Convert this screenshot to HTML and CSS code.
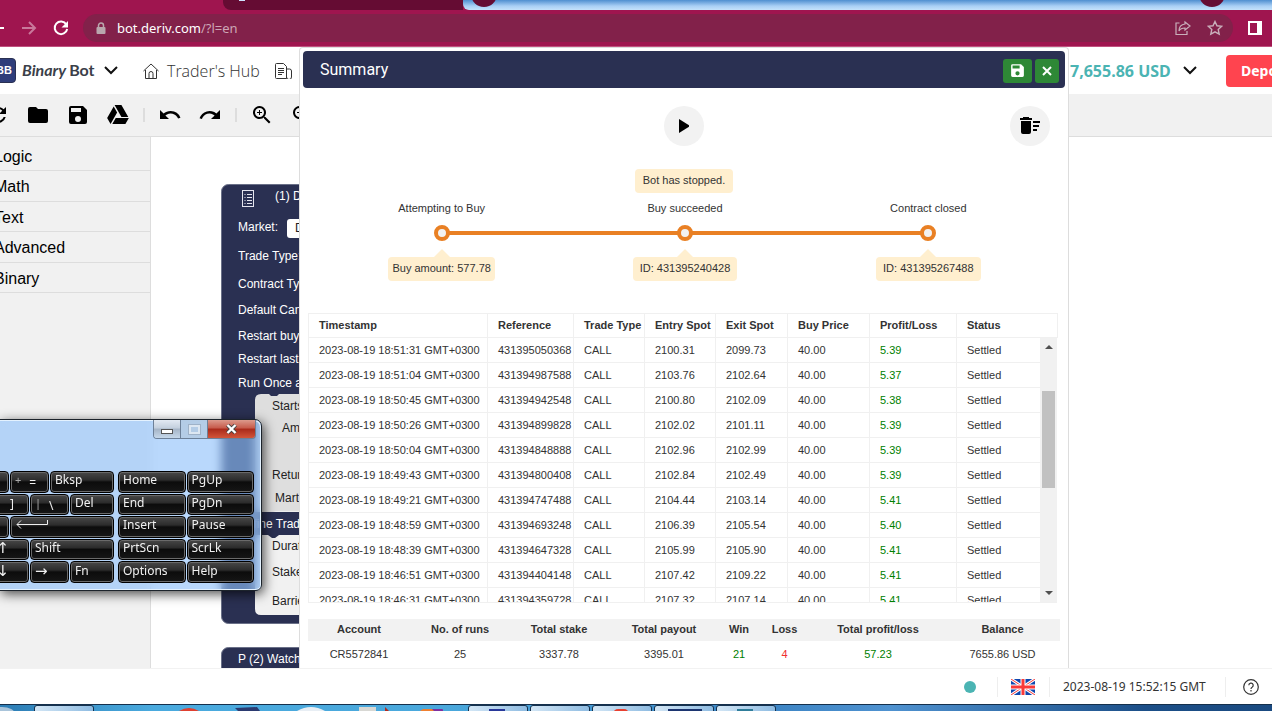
FILE: index.html
```html
<!DOCTYPE html>
<html lang="en">
<head>
  <meta charset="UTF-8" />
  <meta name="viewport" content="width=device-width, initial-scale=1.0"/>
  <title>Binary Bot</title>
  <link rel="stylesheet" href="styles.css">
</head>
<body>
  <!-- Browser chrome -->
  <div class="tabstrip">
    <div class="tab-current"></div>
    <div class="tab-other"><span class="favicon"></span></div>
    <div class="tab-glass"><span class="tab-dot"></span><span class="tab-dot"></span></div>
  </div>
  <div class="browser-bar">
    <button class="nav-btn" aria-label="Back">
      <svg width="16" height="16" viewBox="0 0 16 16"><path d="M15 8H2M8 2L2 8l6 6" fill="none" stroke="#fff" stroke-width="2"/></svg>
    </button>
    <button class="nav-btn" aria-label="Forward">
      <svg width="16" height="16" viewBox="0 0 16 16"><path d="M1 8h12.500M8 2l6 6-6 6" fill="none" stroke="#c9789b" stroke-width="2"/></svg>
    </button>
    <button class="nav-btn" aria-label="Reload">
      <svg width="16" height="16" viewBox="0 0 16 16"><path d="M13.300 4.400A6.300 6.300 0 1 0 14.200 9" fill="none" stroke="#fff" stroke-width="2"/><path d="M15 1v6.500H8.500z" fill="#fff"/></svg>
    </button>
    <div class="address">
      <svg width="10" height="13" viewBox="0 0 10 13"><rect x="0.500" y="5" width="9" height="7" rx="1" fill="#b9a7ad"/><path d="M2.500 5V3.500a2.500 2.500 0 0 1 5 0V5" fill="none" stroke="#b9a7ad" stroke-width="1.500"/></svg>
      <span class="url">bot.deriv.com<span class="url-path">/?l=en</span></span>
      <svg class="share" width="16" height="16" viewBox="0 0 16 16" fill="none" stroke="#c9b0bb" stroke-width="1.200"><path d="M4.500 3H1v11.500h11V11"/><path d="M10 2l5 4-5 4V8c-3 0-5 1-6 3 0-4 2-6.500 6-7z"/></svg>
      <svg width="16" height="16" viewBox="0 0 16 16" fill="none" stroke="#c9b0bb" stroke-width="1.400"><path d="M8 1.500l2 4.300 4.700.5-3.500 3.200 1 4.700L8 11.800l-4.200 2.400 1-4.700L1.300 6.300 6 5.800z"/></svg>
    </div>
    <button class="side-panel" aria-label="Side panel">
      <svg width="14" height="14" viewBox="0 0 14 14"><path d="M0 0h14v14H0zM2 2v10h7V2z" fill="#fff" fill-rule="evenodd"/></svg>
    </button>
  </div>

  <div class="app">
    <header class="header">
      <a class="brand" href="#">
        <span class="brand-box">BB</span>
        <span class="brand-name"><i>Binary</i>Bot</span>
        <svg width="14" height="9" viewBox="0 0 14 9"><path d="M1 1l6 6 6-6" fill="none" stroke="#111" stroke-width="2"/></svg>
      </a>
      <a class="hub" href="#">
        <svg width="16" height="16" viewBox="0 0 16 16" fill="none" stroke="#333"><path d="M.5 8L8 1l7.500 7M2.500 7v8.500h11V7M6 15.500v-5a2 2 0 0 1 4 0v5"/></svg>
        Trader's Hub
      </a>
      <a class="reports" href="#" aria-label="Reports">
        <svg width="17" height="16" viewBox="0 0 17 16" fill="none" stroke="#333"><path d="M11.500 15.500H1.500a1 1 0 0 1-1-1v-13a1 1 0 0 1 1-1h7l3 3zM11.500 6h3a2 2 0 0 1 2 2v6a1.500 1.500 0 0 1-5 0M3 5.500h6M3 7.500h6M3 9.500h6M3 11.500h4"/></svg>
      </a>
      <div class="account">
        <span class="amount">7,655.86 USD</span>
        <svg width="14" height="9" viewBox="0 0 14 9"><path d="M1 1l6 6 6-6" fill="none" stroke="#111" stroke-width="2"/></svg>
        <button class="deposit">Deposit</button>
      </div>
    </header>

    <div class="toolbar">
      <button aria-label="Reset"><svg viewBox="0 0 24 24"><path d="M17.650 6.350A8 8 0 1 0 19.730 14h-2.080A6 6 0 1 1 16.220 7.780L13 11h7V4z"/></svg></button>
      <button aria-label="Load"><svg viewBox="0 0 24 24"><path d="M10 4H4a2 2 0 0 0-2 2v12a2 2 0 0 0 2 2h16a2 2 0 0 0 2-2V8a2 2 0 0 0-2-2h-8z"/></svg></button>
      <button aria-label="Save"><svg viewBox="0 0 24 24"><path d="M17 3H5a2 2 0 0 0-2 2v14a2 2 0 0 0 2 2h14a2 2 0 0 0 2-2V7zm-5 16a3 3 0 1 1 0-6 3 3 0 0 1 0 6zm3-10H5V5h10z"/></svg></button>
      <button aria-label="Google Drive"><svg viewBox="0 0 24 24"><path d="M7.710 3.500L1.150 15l3.430 6 6.550-11.500zM9.730 15L6.300 21h13.120l3.430-6zM22.280 14L15.420 2H8.580l6.850 12z"/></svg></button>
      <span class="divider"></span>
      <button aria-label="Undo"><svg viewBox="0 0 24 24"><path d="M12.500 8c-2.650 0-5.050 1-6.900 2.600L2 7v9h9l-3.620-3.620A8 8 0 0 1 20.090 15.500l2.370-.78A10.500 10.500 0 0 0 12.500 8z"/></svg></button>
      <button aria-label="Redo"><svg viewBox="0 0 24 24"><path d="M18.400 10.600A10.500 10.500 0 0 0 1.540 15.220l2.360.78a8 8 0 0 1 12.720-3.620L13 16h9V7z"/></svg></button>
      <span class="divider"></span>
      <button aria-label="Zoom in"><svg viewBox="0 0 24 24"><path d="M15.500 14h-.79l-.28-.27a6.500 6.500 0 1 0-.7.7l.27.28v.79l5 4.990L20.490 19zm-6 0a4.500 4.500 0 1 1 0-9 4.500 4.500 0 0 1 0 9zM10 7H9v2H7v1h2v2h1v-2h2V9h-2z"/></svg></button>
      <button aria-label="Zoom out"><svg viewBox="0 0 24 24"><path d="M15.500 14h-.79l-.28-.27a6.500 6.500 0 1 0-.7.7l.27.28v.79l5 4.990L20.490 19zm-6 0a4.500 4.500 0 1 1 0-9 4.500 4.500 0 0 1 0 9zM7 9h5v1H7z"/></svg></button>
    </div>

    <div class="workspace">
      <nav class="toolbox">
        <a href="#">Logic</a>
        <a href="#">Math</a>
        <a href="#">Text</a>
        <a href="#">Advanced</a>
        <a href="#">Binary</a>
      </nav>
      <svg class="canvas">
        <g transform="translate(-151 -137)">
          <rect class="block" x="221.500" y="184.500" width="320" height="439" rx="7"/>
          <g fill="none" stroke="#e5e5ee"><rect x="242.500" y="190.500" width="11" height="16"/><path d="M244.500 194.500h1M247 194.500h5M244.500 197.500h1M247 197.500h5M244.500 200.500h1M247 200.500h5M244.500 203.500h1M247 203.500h5"/></g>
          <rect x="287" y="219" width="60" height="19" rx="3" fill="#fff"/>
          <g class="label">
            <text x="275" y="200">(1) Define</text>
            <text x="238" y="231">Market:</text>
            <text x="238" y="260">Trade Type:</text>
            <text x="238" y="288">Contract Type:</text>
            <text x="238" y="314">Default Candle</text>
            <text x="238" y="340">Restart buy/sell</text>
            <text x="238" y="363">Restart last</text>
            <text x="238" y="387">Run Once at</text>
          </g>
          <path d="M542 394H279l-2 2h-6l-2-2h-8q-6 0-6 6v112h287z" fill="#dedede"/>
          <path d="M542 535H279l-4 3h-3l-4-3h-13v74q0 6 6 6h281z" fill="#f1f1f1"/>
          <path d="M255 512h18l3-1h266v1z" fill="#eee"/>
          <g class="label dark">
            <text x="295" y="232">Derived</text>
            <text x="272" y="410">Starts</text>
            <text x="282" y="432">Amount</text>
            <text x="272" y="479">Return</text>
            <text x="275" y="502">Martingale</text>
            <text x="272" y="550">Duration:</text>
            <text x="272" y="576">Stake:</text>
            <text x="272" y="605">Barrier</text>
          </g>
          <text class="label" x="238" y="528">Define Trade</text>
          <rect class="block" x="221.500" y="647.500" width="320" height="60" rx="7"/>
          <text class="label" x="238" y="663">P (2) Watch</text>
        </g>
      </svg>
    </div>

    <!-- Summary dialog -->
    <section class="dialog" role="dialog" aria-labelledby="summary-title">
      <div class="dialog-title">
        <h1 id="summary-title">Summary</h1>
        <button class="btn-save" aria-label="Save"><svg width="17" height="17" viewBox="0 0 24 24"><path fill="#fff" d="M17 3H5a2 2 0 0 0-2 2v14a2 2 0 0 0 2 2h14a2 2 0 0 0 2-2V7zm-5 16a3 3 0 1 1 0-6 3 3 0 0 1 0 6zm3-10H5V5h10z"/></svg></button>
        <button class="btn-close" aria-label="Close"><svg width="10" height="10" viewBox="0 0 10 10"><path d="M1 1l8 8M9 1L1 9" stroke="#fff" stroke-width="2"/></svg></button>
      </div>
      <div class="actions">
        <button class="round run" aria-label="Run"><svg width="10" height="14" viewBox="0 0 10 14"><path d="M0 0l11 7-11 7z"/></svg></button>
        <button class="round clear" aria-label="Clear"><svg width="20" height="18" viewBox="0 0 20 18"><path d="M1 4h10v11a2 2 0 0 1-2 2H3a2 2 0 0 1-2-2zM0 1h3V0h6v1H12v2H0zM13 4h7v2h-7zM13 8h6v2h-6zM13 12h4v2h-4z"/></svg></button>
      </div>
      <div class="status"><span class="bubble">Bot has stopped.</span></div>
      <ol class="progress">
        <li><span class="step">Attempting to Buy</span><span class="node"></span><span class="bubble tip">Buy amount: 577.78</span></li>
        <li><span class="step">Buy succeeded</span><span class="node"></span><span class="bubble tip wide">ID: 431395240428</span></li>
        <li><span class="step">Contract closed</span><span class="node"></span><span class="bubble tip wide">ID: 431395267488</span></li>
      </ol>

      <table class="trades trades-head">
        <tr>
          <th class="c-time">Timestamp</th>
          <th class="c-ref">Reference</th>
          <th class="c-type">Trade Type</th>
          <th class="c-entry">Entry Spot</th>
          <th class="c-exit">Exit Spot</th>
          <th class="c-price">Buy Price</th>
          <th class="c-profit">Profit/Loss</th>
          <th>Status</th>
        </tr>
      </table>
      <div class="trades-scroll">
        <table class="trades" id="trades"></table>
        <div class="scrollbar"><span class="arrow up"></span><span class="thumb"></span><span class="arrow down"></span></div>
      </div>

      <table class="totals">
        <tr>
          <th class="t-account">Account</th>
          <th class="t-runs">No. of runs</th>
          <th class="t-stake">Total stake</th>
          <th class="t-payout">Total payout</th>
          <th class="t-win">Win</th>
          <th class="t-loss">Loss</th>
          <th class="t-profit">Total profit/loss</th>
          <th>Balance</th>
        </tr>
        <tr>
          <td>CR5572841</td>
          <td>25</td>
          <td>3337.78</td>
          <td>3395.01</td>
          <td class="profit">21</td>
          <td class="loss">4</td>
          <td class="profit">57.23</td>
          <td>7655.86 USD</td>
        </tr>
      </table>
    </section>
  </div>

  <footer class="footer">
    <span class="online"></span>
    <span class="sep"></span>
    <svg width="24" height="16" viewBox="0 0 24 16">
      <rect width="24" height="16" fill="#0f47af"/>
      <path d="M0 0l24 16M24 0L0 16" stroke="#fff" stroke-width="3"/>
      <path d="M0 0l24 16M24 0L0 16" stroke="#f93939" stroke-width="1"/>
      <path d="M12 0v16M0 8h24" stroke="#fff" stroke-width="5"/>
      <path d="M12 0v16M0 8h24" stroke="#f93939" stroke-width="3"/>
    </svg>
    <span class="sep"></span>
    <span class="clock">2023-08-19 15:52:15 GMT</span>
    <span class="sep"></span>
    <a class="help" href="#" aria-label="Help">
      <svg width="16" height="16" viewBox="0 0 16 16" fill="none" stroke="#333" stroke-width="1.200"><circle cx="8" cy="8" r="7.300"/><path d="M5.800 6.300a2.200 2.200 0 1 1 3.300 1.900Q8 8.800 8 10M8 11v1.400"/></svg>
    </a>
  </footer>

  <!-- Desktop taskbar -->
  <div class="taskbar">
    <span class="orb"></span>
    <span class="task first"></span>
    <svg class="pinned" width="320" height="6" viewBox="0 0 320 6">
      <path d="M56 6q10-6 20 0z" fill="#e04030"/>
      <path d="M112 3l22-1 3 4h-22z" fill="#2b3a70"/>
      <path d="M174 6q14-8 28 0z" fill="#e8eef4"/>
      <rect x="236" y="2" width="17" height="4" fill="#d8d8d4"/><path d="M262 2l4 4h-4z" fill="#b02a20"/>
      <path d="M297 6l3-2h9l3 2z" fill="#f08030"/><path d="M309 4h10l4 2h-12z" fill="#8030a0"/>
    </svg>
    <div class="tasks">
      <span class="task"><i class="app-navy"></i></span>
      <span class="task"></span>
      <span class="task"><i class="app-red"></i></span>
      <span class="task"><i class="app-wide"></i></span>
      <span class="task"><i class="app-teal"></i></span>
    </div>
  </div>

  <!-- On-screen keyboard window -->
  <div class="osk">
    <div class="osk-buttons">
      <button class="min" aria-label="Minimize"><span></span></button>
      <button class="max" aria-label="Maximize" disabled><span></span></button>
      <button class="close" aria-label="Close window"><svg width="11" height="10" viewBox="0 0 11 10"><path d="M1.500 1l8 8M9.500 1l-8 8" stroke="#444" stroke-width="4"/><path d="M1.500 1l8 8M9.500 1l-8 8" stroke="#fff" stroke-width="2.400"/></svg></button>
    </div>
    <div class="keys">
      <div class="key-row"><button class="w-rest"></button><button class="w-small two"><small>+</small>=</button><button class="w-mid">Bksp</button></div>
      <div class="key-row"><button class="w-rest right low">]</button><button class="w-small two"><small>|</small>\</button><button class="w-del">Del</button></div>
      <div class="key-row"><button class="w-rest"></button><button class="w-enter" aria-label="Enter"><svg width="34" height="10" viewBox="0 0 34 10"><path d="M32.500 1v4.500H2M6 1.500l-4 4 4 4" fill="none" stroke="#eee"/></svg></button></div>
      <div class="key-row"><button class="w-rest right arrow-key">↑</button><button class="w-shift">Shift</button></div>
      <div class="key-row"><button class="w-rest right arrow-key">↓</button><button class="w-small arrow-key">→</button><button class="w-del">Fn</button></div>
    </div>
    <div class="keys side">
      <div class="key-row"><button>Home</button><button>PgUp</button></div>
      <div class="key-row"><button>End</button><button>PgDn</button></div>
      <div class="key-row"><button>Insert</button><button>Pause</button></div>
      <div class="key-row"><button>PrtScn</button><button>ScrLk</button></div>
      <div class="key-row"><button>Options</button><button>Help</button></div>
    </div>
  </div>

  <script>
    // time, reference, entry spot, exit spot, profit
    const trades = [
      ["18:51:31", "431395050368", "2100.31", "2099.73", "5.39"],
      ["18:51:04", "431394987588", "2103.76", "2102.64", "5.37"],
      ["18:50:45", "431394942548", "2100.80", "2102.09", "5.38"],
      ["18:50:26", "431394899828", "2102.02", "2101.11", "5.39"],
      ["18:50:04", "431394848888", "2102.96", "2102.99", "5.39"],
      ["18:49:43", "431394800408", "2102.84", "2102.49", "5.39"],
      ["18:49:21", "431394747488", "2104.44", "2103.14", "5.41"],
      ["18:48:59", "431394693248", "2106.39", "2105.54", "5.40"],
      ["18:48:39", "431394647328", "2105.99", "2105.90", "5.41"],
      ["18:46:51", "431394404148", "2107.42", "2109.22", "5.41"],
      ["18:46:31", "431394359728", "2107.32", "2107.14", "5.41"]
    ];
    document.getElementById("trades").innerHTML = trades.map(t => `<tr>
      <td class="c-time">2023-08-19 ${t[0]} GMT+0300</td>
      <td class="c-ref">${t[1]}</td>
      <td class="c-type">CALL</td>
      <td class="c-entry">${t[2]}</td>
      <td class="c-exit">${t[3]}</td>
      <td class="c-price">40.00</td>
      <td class="c-profit profit">${t[4]}</td>
      <td>Settled</td>
    </tr>`).join("");
  </script>
</body>
</html>
```

FILE: styles.css
```css
* {
  box-sizing: border-box;
}
body {
  margin: 0;
  height: 100vh;
  display: flex;
  flex-direction: column;
  overflow: hidden;
  background: #fff;
  color: #333;
  font-family: "Liberation Sans", Arial, sans-serif;
  font-size: 11px;
}
button {
  border: none;
  padding: 0;
  background: none;
  font-family: inherit;
  cursor: pointer;
}
a {
  color: inherit;
  text-decoration: none;
}
svg {
  flex: none;
}

/* browser */
.tabstrip {
  display: flex;
  height: 10px;
  background: #9f154f;
}
.tab-current {
  width: 223px;
}
.tab-other {
  width: 240px;
  background: #650c33;
  border-bottom-left-radius: 8px;
  padding-left: 16px;
}
.favicon {
  display: block;
  width: 6px;
  height: 1px;
  background: #cfe4ff;
}
.tab-glass {
  flex: 1;
  display: flex;
  justify-content: space-between;
  padding: 0 47px 0 8px;
  overflow: hidden;
  border-bottom-left-radius: 6px;
  background: linear-gradient(#4f8fd0, #a9cff5 60%, #c4e2fb);
}
.tab-dot {
  width: 26px;
  height: 26px;
  margin-top: -19px;
  border-radius: 50%;
  background: #650c33;
}
.browser-bar {
  display: flex;
  align-items: center;
  height: 37px;
  padding: 0 10px 0 0;
  background: #9f154f;
  border-bottom: 1px solid #c0517f;
}
.nav-btn {
  display: flex;
  width: 16px;
  margin-right: 16px;
}
.nav-btn:first-child {
  margin-left: -11px;
}
.address {
  flex: 1;
  display: flex;
  align-items: center;
  height: 28px;
  margin-left: -2px;
  padding: 0 10px 0 13px;
  border-radius: 14px;
  background: #82214a;
}
.url {
  flex: 1;
  padding-left: 11px;
  color: #fff;
  font: 13px "Noto Sans", sans-serif;
}
.url-path {
  color: #cda6b6;
}
.share {
  margin-right: 16px;
}
.side-panel {
  display: flex;
  margin-left: 15px;
}

/* app */
.app {
  position: relative;
  flex: 1;
  min-height: 0;
  display: flex;
  flex-direction: column;
}
.header {
  display: flex;
  align-items: center;
  height: 47px;
  overflow: hidden;
}
.brand {
  display: flex;
  align-items: center;
  margin-left: -10px;
}
.brand-box {
  width: 26px;
  height: 25px;
  line-height: 23px;
  padding-left: 5px;
  border-radius: 4px;
  background: #2f3d7a;
  border: 1px solid #2a3052;
  color: #fff;
  font-size: 11px;
  font-weight: bold;
}
.brand-name {
  width: 73px;
  margin: 0 9px 0 6px;
  padding-bottom: 2px;
  color: #3b4049;
  font: bold 16px Lato, sans-serif;
}
.brand-name i {
  margin-right: 3px;
}
.hub {
  display: flex;
  align-items: center;
  gap: 8px;
  margin-left: 25px;
  font: 300 16px "Open Sans", sans-serif;
}
.reports {
  display: flex;
  margin-left: 15px;
}
.account {
  display: flex;
  align-items: center;
  margin-left: auto;
  margin-right: -40px;
}
.amount {
  min-width: 103px;
  margin-right: 10px;
  color: #4bb4b3;
  font: bold 16px "Noto Sans", sans-serif;
}
.deposit {
  width: 86px;
  height: 32px;
  margin-left: 29px;
  padding-left: 15px;
  border-radius: 4px;
  background: #ff444f;
  color: #fff;
  text-align: left;
  font: bold 14px "Noto Sans", sans-serif;
}
.toolbar {
  display: flex;
  align-items: center;
  height: 43px;
  padding-bottom: 1px;
  background: #f1f1f1;
  border-bottom: 1px solid #ddd;
}
.toolbar button {
  display: flex;
  justify-content: center;
  width: 40px;
}
.toolbar button:first-child {
  margin-left: -22px;
}
.toolbar svg {
  width: 24px;
  height: 24px;
}
.divider {
  width: 2px;
  height: 14px;
  margin: 0 5px;
  background: #ddd;
}
.workspace {
  flex: 1;
  min-height: 0;
  display: flex;
}
.toolbox {
  width: 151px;
  padding-top: 4px;
  background: #f1f1f1;
  border-right: 1px solid #ddd;
}
.toolbox a {
  display: block;
  height: 30px;
  line-height: 32px;
  margin-left: -6px;
  border-bottom: 1px solid #ddd;
  color: #000;
  font-size: 16px;
}
.toolbox a:nth-child(even) {
  height: 31px;
}
.canvas {
  flex: 1;
  height: 100%;
}
.block {
  fill: #2a3052;
  stroke: #6a7088;
}
.label {
  fill: #fff;
  font-size: 12px;
}
.dark {
  fill: #222;
}

/* summary dialog, floats over the workspace */
.dialog {
  position: absolute;
  top: 0;
  bottom: 0;
  left: 299px;
  right: 203px;
  display: flex;
  flex-direction: column;
  padding: 3px 0 0;
  background: #fff;
  border: 1px solid #ddd;
  border-bottom: none;
  border-radius: 4px 4px 0 0;
}
.dialog-title {
  display: flex;
  align-items: center;
  gap: 3px;
  height: 37px;
  margin: 0 3px;
  padding: 2px 6px 0 17px;
  border-radius: 4px;
  background: #2a3052;
}
.dialog-title h1 {
  flex: 1;
  margin: 0;
  padding-bottom: 2px;
  color: #fff;
  font: 16px Roboto, sans-serif;
}
.dialog-title button {
  display: flex;
  align-items: center;
  justify-content: center;
  height: 24px;
  border-radius: 3px;
  background: #2e8836;
}
.btn-save {
  width: 29px;
}
.btn-close {
  width: 24px;
}
.actions {
  display: grid;
  grid-template-columns: 1fr 40px 1fr;
  margin: 18px 18px 0;
}
.round {
  display: flex;
  align-items: center;
  justify-content: center;
  width: 40px;
  height: 40px;
  border-radius: 50%;
  background: #f2f2f2;
}
.run {
  grid-column: 2;
}
.clear {
  justify-self: end;
}
.status {
  margin-top: 23px;
  text-align: center;
}
.bubble {
  display: inline-block;
  height: 24px;
  line-height: 23px;
  padding: 0 8px;
  border-radius: 4px;
  background: #ffefcf;
}
.progress {
  display: flex;
  margin: 6px 18px 0 20px;
  padding: 0;
  list-style: none;
}
.progress li {
  position: relative;
  flex: 1;
  display: flex;
  flex-direction: column;
  align-items: center;
}
.progress li + li::before {
  content: "";
  position: absolute;
  top: 32px;
  right: 50%;
  width: 100%;
  height: 4px;
  background: #e98024;
}
.step {
  line-height: 18px;
}
.node {
  z-index: 1;
  width: 16px;
  height: 16px;
  margin: 8px 0 16px;
  border: 4px solid #e98024;
  border-radius: 50%;
  background: #f2f2f2;
}
.tip {
  position: relative;
  padding: 0 4px;
}
.wide {
  padding: 0 7px;
}
.tip::before {
  content: "";
  position: absolute;
  left: 50%;
  top: -8px;
  margin-left: -8px;
  border: 8px solid transparent;
  border-top: none;
  border-bottom-color: #ffefcf;
}
.trades {
  width: 100%;
  table-layout: fixed;
  border-spacing: 0;
}
.trades th,
.trades td {
  height: 25px;
  padding: 0 0 0 10px;
  border-right: 1px solid #f0f0f0;
  border-bottom: 1px solid #f0f0f0;
  text-align: left;
  white-space: nowrap;
}
.trades td:last-child {
  border-right: none;
}
.trades-head {
  width: auto;
  margin: 32px 10px 0 8px;
  border: 1px solid #f0f0f0;
  border-width: 1px 0 0 1px;
}
.trades .c-time {
  width: 179px;
}
.c-ref {
  width: 86px;
}
.c-type {
  width: 71px;
}
.c-entry {
  width: 71px;
}
.c-exit {
  width: 72px;
}
.c-price {
  width: 82px;
}
.c-profit {
  width: 87px;
}
.trades-head th {
  height: 24px;
  padding-bottom: 2px;
}
.trades-scroll {
  display: flex;
  align-items: flex-start;
  height: 265px;
  margin: 0 11px 0 8px;
  overflow: hidden;
  border: 1px solid #f0f0f0;
  border-width: 0 0 1px 1px;
}
.scrollbar {
  flex: none;
  display: flex;
  flex-direction: column;
  align-items: center;
  width: 17px;
  height: 100%;
  padding: 7px 0;
  background: #f1f1f1;
}
.arrow {
  border: 4px solid transparent;
}
.up {
  border-top: none;
  border-bottom-color: #505050;
}
.down {
  margin-top: auto;
  border-bottom: none;
  border-top-color: #505050;
}
.thumb {
  width: 13px;
  height: 97px;
  margin-top: 42px;
  background: #c1c1c1;
}
.profit {
  color: #008000;
}
.loss {
  color: #f03030;
}
.totals {
  table-layout: fixed;
  margin: 16px 8px 0;
  border-spacing: 0;
}
.totals th {
  height: 22px;
  padding: 0 0 2px;
  background: #f2f2f2;
}
.totals td {
  height: 27px;
  padding: 0 0 2px;
  text-align: center;
}
.t-account {
  width: 102px;
}
.t-runs {
  width: 100px;
}
.t-stake {
  width: 98px;
}
.t-payout {
  width: 112px;
}
.t-win {
  width: 38px;
}
.t-loss {
  width: 53px;
}
.t-profit {
  width: 134px;
}

.footer {
  display: flex;
  align-items: center;
  justify-content: flex-end;
  height: 36px;
  padding-right: 13px;
  border-top: 1px solid #f2f2f2;
}
.online {
  width: 12px;
  height: 12px;
  margin-right: 7px;
  border-radius: 50%;
  background: #4bb4b3;
}
.sep {
  width: 1px;
  height: 20px;
  margin: 0 13px 0 14px;
  background: #eee;
}
.clock {
  min-width: 148px;
  font: 12px "Noto Sans", sans-serif;
}
.help {
  display: flex;
  margin-left: 4px;
}

.taskbar {
  display: flex;
  height: 7px;
  overflow: hidden;
  border-top: 1px solid #15304c;
  background: linear-gradient(90deg, #2c7cb4, #4aaade 12%, #4aa8dc 35%, #3c84c4 60%, #4f92d0 70%, #1c4f88 90%, #1a4a80);
}
.orb {
  width: 26px;
  height: 14px;
  margin: 2px 0 0 -11px;
  border-radius: 50%;
  background: #a9c4da;
}
.task {
  width: 60px;
  height: 8px;
  border: 1px solid #16324f;
  border-radius: 3px 3px 0 0;
  background: linear-gradient(90deg, #d3e6f5, #8fbce2);
}
.first {
  margin-left: 19px;
}
.pinned {
  margin-left: 29px;
}
.tasks {
  display: flex;
  gap: 2px;
  margin-left: 25px;
}
.task i {
  display: block;
  width: 16px;
  height: 5px;
  margin: 3px 0 0 20px;
}
.app-navy {
  background: #28389a;
}
.app-red {
  background: #e84030;
  border-radius: 8px 8px 0 0;
}
.task .app-wide {
  width: 34px;
  margin-left: 13px;
  background: #1c3570;
}
.app-teal {
  background: #2f7d9a;
}

/* on-screen keyboard window */
.osk {
  position: absolute;
  left: -1px;
  top: 419px;
  width: 263px;
  height: 172px;
  display: flex;
  align-items: flex-end;
  justify-content: flex-end;
  gap: 4px;
  padding: 0 7px 7px 0;
  border: 1px solid #1c232b;
  border-radius: 0 7px 6px 0;
  background: rgba(142, 192, 250, 0.62);
  backdrop-filter: blur(5px);
  box-shadow: inset -1px 1px 0 #e4f2ff, inset 0 -1px 0 #e4f2ff, 2px 3px 12px rgba(0, 0, 0, 0.7);
}
.osk-buttons {
  position: absolute;
  top: 0;
  right: 5px;
  display: flex;
  height: 19px;
  border: 1px solid #6d8098;
  border-top: none;
  border-radius: 0 0 4px 4px;
  overflow: hidden;
}
.osk-buttons button {
  display: flex;
  align-items: center;
  justify-content: center;
  width: 27px;
  border-right: 1px solid #6d8098;
  background: linear-gradient(#e3eaf3, #c3cfdd 45%, #a5b4c6 50%, #c6d8ea);
}
.osk-buttons .max {
  background: #b4cce6;
}
.osk-buttons .close {
  width: 47px;
  border: none;
  background: linear-gradient(#dc9a8c, #c65a4a 45%, #a92a1a 50%, #d2553a);
}
.min span {
  width: 12px;
  height: 5px;
  margin-top: 4px;
  border: 1px solid #555;
  background: #fff;
}
.max span {
  width: 11px;
  height: 9px;
  border: 2px solid #dde7f2;
  outline: 1px solid #9fb2c8;
}
.keys {
  flex: 1;
  display: flex;
  flex-direction: column;
  gap: 1px;
  height: 112px;
}
.side {
  flex: none;
  width: 136px;
}
.key-row {
  flex: 1;
  display: flex;
  gap: 1px;
}
.key-row button {
  flex: 1;
  padding: 0 4px 3px;
  overflow: hidden;
  border: 1px solid #000;
  border-radius: 4px;
  background: linear-gradient(#484848, #2c2c2c 40%, #0c0c0c 50%, #161616);
  box-shadow: inset 0 0 0 1px #6a6a6a;
  color: #f0f0f0;
  text-align: left;
  font: 12px/16px "Noto Sans", sans-serif;
}
.key-row .right {
  text-align: right;
  padding-right: 14px;
}
.key-row .low {
  padding-bottom: 0;
}
.key-row .arrow-key {
  font: 15px/16px "DejaVu Sans", sans-serif;
}
.key-row .arrow-key.right {
  padding-right: 19px;
}
.key-row .w-small {
  flex: none;
  width: 39px;
}
.key-row .w-mid {
  flex: none;
  width: 64px;
}
.key-row .w-del {
  flex: none;
  width: 44px;
}
.key-row .w-enter {
  flex: none;
  width: 104px;
}
.key-row .w-shift {
  flex: none;
  width: 84px;
}
.key-row .two {
  padding-bottom: 0;
}
.two small {
  margin-right: 8px;
  vertical-align: 3px;
  color: #aaa;
  font-size: 11px;
}
```
